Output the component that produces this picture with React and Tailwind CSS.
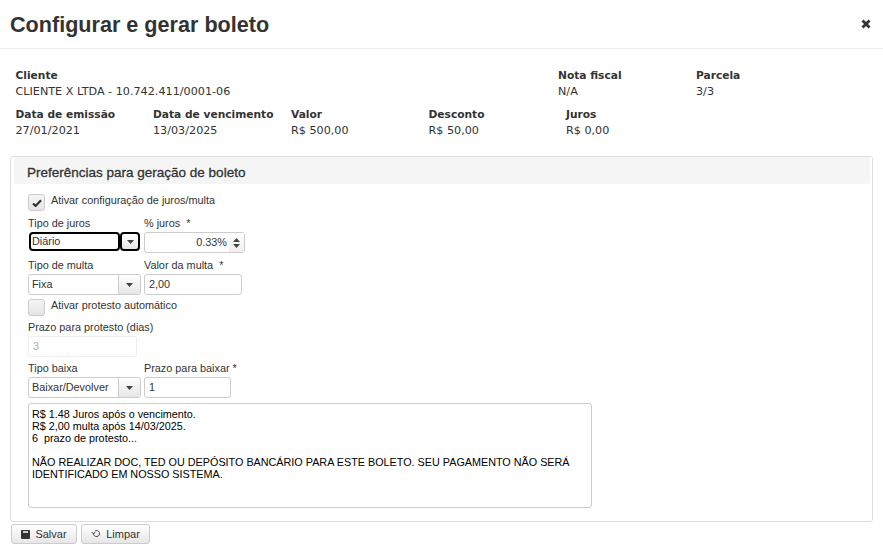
import React from "react";

const info = "font-['DejaVu_Sans',sans-serif] text-[11.2px] leading-[16px] text-[#333]";

function Info({ label, value, className = "" }) {
  return (
    <div className={className}>
      <div className="font-bold text-[10.65px] text-[#333]">{label}</div>
      <div>{value}</div>
    </div>
  );
}

function Caret() {
  return (
    <svg width="7" height="4" viewBox="0 0 7 4"><path d="M0 0h7L3.5 4z" fill="#444" /></svg>
  );
}

function Combo({ value, focused = false, wide = "w-[113px]" }) {
  if (focused) {
    return (
      <div className="flex h-[19px] w-[111px] mt-[1px] ml-[1px]">
        <div className="flex-1 flex items-center pl-[1px] border-2 border-black rounded-[4px] bg-white">{value}</div>
        <div className="w-[20px] flex items-center justify-center border-2 border-black rounded-[4px] bg-gradient-to-b from-white to-[#e6e6e6]"><Caret /></div>
      </div>
    );
  }
  return (
    <div className={`flex h-[21px] ${wide} border border-[#ccc] rounded-[3px] bg-white`}>
      <div className="flex-1 flex items-center pl-[3px]">{value}</div>
      <div className="w-[22px] flex items-center justify-center border-l border-[#ccc] bg-gradient-to-b from-white to-[#e6e6e6] rounded-r-[3px]"><Caret /></div>
    </div>
  );
}

function Check({ checked = false }) {
  return (
    <div className="w-[17px] h-[17px] border border-[#ccc] rounded-[3px] bg-gradient-to-b from-[#f6f6f6] to-[#e4e4e4] flex items-center justify-center shrink-0">
      {checked && (
        <svg width="10" height="8" viewBox="0 0 10 8"><path d="M1 4.5l2.6 2.4L9 1.2" fill="none" stroke="#333" strokeWidth="2.2" /></svg>
      )}
    </div>
  );
}

function Field({ label, children, className = "" }) {
  return (
    <div className={className}>
      <div className="h-[15px] leading-[15px] mb-[1px] whitespace-pre">{label}</div>
      {children}
    </div>
  );
}

const input = "h-[21px] border border-[#ccc] rounded-[3px] bg-white flex items-center px-[4px]";

export default function App() {
  return (
    <div className="w-[883px] h-[560px] bg-white overflow-hidden font-['Liberation_Sans',Arial,sans-serif] text-[#333]">
      <header className="h-[49px] border-b border-[#eee] flex items-center justify-between pl-[10px] pr-[12px]">
        <h1 className="text-[21.6px] font-bold text-[#333] leading-none mt-[2px]">Configurar e gerar boleto</h1>
        <svg width="10" height="10" viewBox="0 0 10 10" className="mb-[1px]">
          <path d="M1.5 1.5l7 7M8.5 1.5l-7 7" stroke="#333" strokeWidth="2.8" />
        </svg>
      </header>

      <section className={`${info} pt-[19px] pl-[15.5px]`}>
        <div className="flex h-[39px]">
          <Info label="Cliente" value="CLIENTE X LTDA - 10.742.411/0001-06" className="w-[542.5px]" />
          <Info label="Nota fiscal" value="N/A" className="w-[138px]" />
          <Info label="Parcela" value="3/3" />
        </div>
        <div className="flex">
          <Info label="Data de emissão" value="27/01/2021" className="w-[137.5px]" />
          <Info label="Data de vencimento" value="13/03/2025" className="w-[138px]" />
          <Info label="Valor" value="R$ 500,00" className="w-[137.5px]" />
          <Info label="Desconto" value="R$ 50,00" className="w-[137.5px]" />
          <Info label="Juros" value="R$ 0,00" />
        </div>
      </section>

      <section className="mx-[10px] mt-[17px] h-[366px] border border-[#ddd] rounded-[3px] pl-[3px] pr-[2px] text-[10.85px] text-[#333]">
        <div className="h-[27px] bg-[#f5f5f5] rounded-[3px] flex items-center pt-[5px] pl-[13px] text-[13.5px] [-webkit-text-stroke:0.3px_#333] text-[#333]">
          Preferências para geração de boleto
        </div>
        <div className="pl-[14px] pt-[10px]">
          <div className="flex gap-[6px] h-[20px]">
            <Check checked />
            <span className="leading-[13px]">Ativar configuração de juros/multa</span>
          </div>
          <div className="flex mt-[2px]">
            <Field label="Tipo de juros" className="w-[116px]"><Combo value="Diário" focused /></Field>
            <Field label="% juros  *">
              <div className="flex h-[21px] w-[101px] border border-[#ccc] rounded-[3px] bg-white">
                <div className="flex-1 flex items-center justify-end pr-[2px]">0.33%</div>
                <div className="w-[15px] flex flex-col items-center justify-center gap-[2px] bg-gradient-to-b from-white to-[#eee]">
                  <svg width="7" height="4" viewBox="0 0 7 4"><path d="M0 4h7L3.5 0z" fill="#444" /></svg>
                  <Caret />
                </div>
              </div>
            </Field>
          </div>
          <div className="flex mt-[5px]">
            <Field label="Tipo de multa" className="w-[116px]"><Combo value="Fixa" /></Field>
            <Field label="Valor da multa  *"><div className={`${input} w-[98px]`}>2,00</div></Field>
          </div>
          <div className="flex gap-[6px] h-[20px] mt-[4px]">
            <Check />
            <span className="leading-[13px]">Ativar protesto automático</span>
          </div>
          <Field label="Prazo para protesto (dias)" className="mt-[1px]">
            <div className={`${input} w-[109px] border-[#eee] text-[#aaa]`}>3</div>
          </Field>
          <div className="flex mt-[4px]">
            <Field label="Tipo baixa" className="w-[116px]"><Combo value="Baixar/Devolver" /></Field>
            <Field label="Prazo para baixar *"><div className={`${input} w-[87px]`}>1</div></Field>
          </div>
          <div className="w-[564px] h-[105px] mt-[5px] border border-[#ccc] rounded-[3px] px-[3px] pt-[4px] text-[#000] text-[10.8px] leading-[12px] whitespace-pre-wrap">
            {"R$ 1.48 Juros após o vencimento.\nR$ 2,00 multa após 14/03/2025.\n6  prazo de protesto...\n\nNÃO REALIZAR DOC, TED OU DEPÓSITO BANCÁRIO PARA ESTE BOLETO. SEU PAGAMENTO NÃO SERÁ IDENTIFICADO EM NOSSO SISTEMA."}
          </div>
        </div>
      </section>

      <div className="flex gap-[4px] ml-[11px] mt-[2px] text-[11px]">
        <button className="w-[66px] h-[20px] border border-[#ccc] rounded-[3px] bg-gradient-to-b from-white to-[#e6e6e6] flex items-center justify-center gap-[5px]">
          <svg width="9" height="9" viewBox="0 0 9 9"><path d="M0 1a1 1 0 011-1h7a1 1 0 011 1v7a1 1 0 01-1 1H1a1 1 0 01-1-1z" fill="#333" /><rect x="2" y="1" width="5" height="2" fill="#ccc" /></svg>
          Salvar
        </button>
        <button className="w-[69px] h-[20px] border border-[#ccc] rounded-[3px] bg-gradient-to-b from-white to-[#e6e6e6] flex items-center justify-center gap-[5px]">
          <svg width="10" height="10" viewBox="0 0 10 10" fill="none" stroke="#444" strokeWidth="1"><path d="M2.5 4.5A3 3 0 1 0 4 2" /><path d="M0.8 3.2L2.6 5 4 3" /></svg>
          Limpar
        </button>
      </div>
    </div>
  );
}
